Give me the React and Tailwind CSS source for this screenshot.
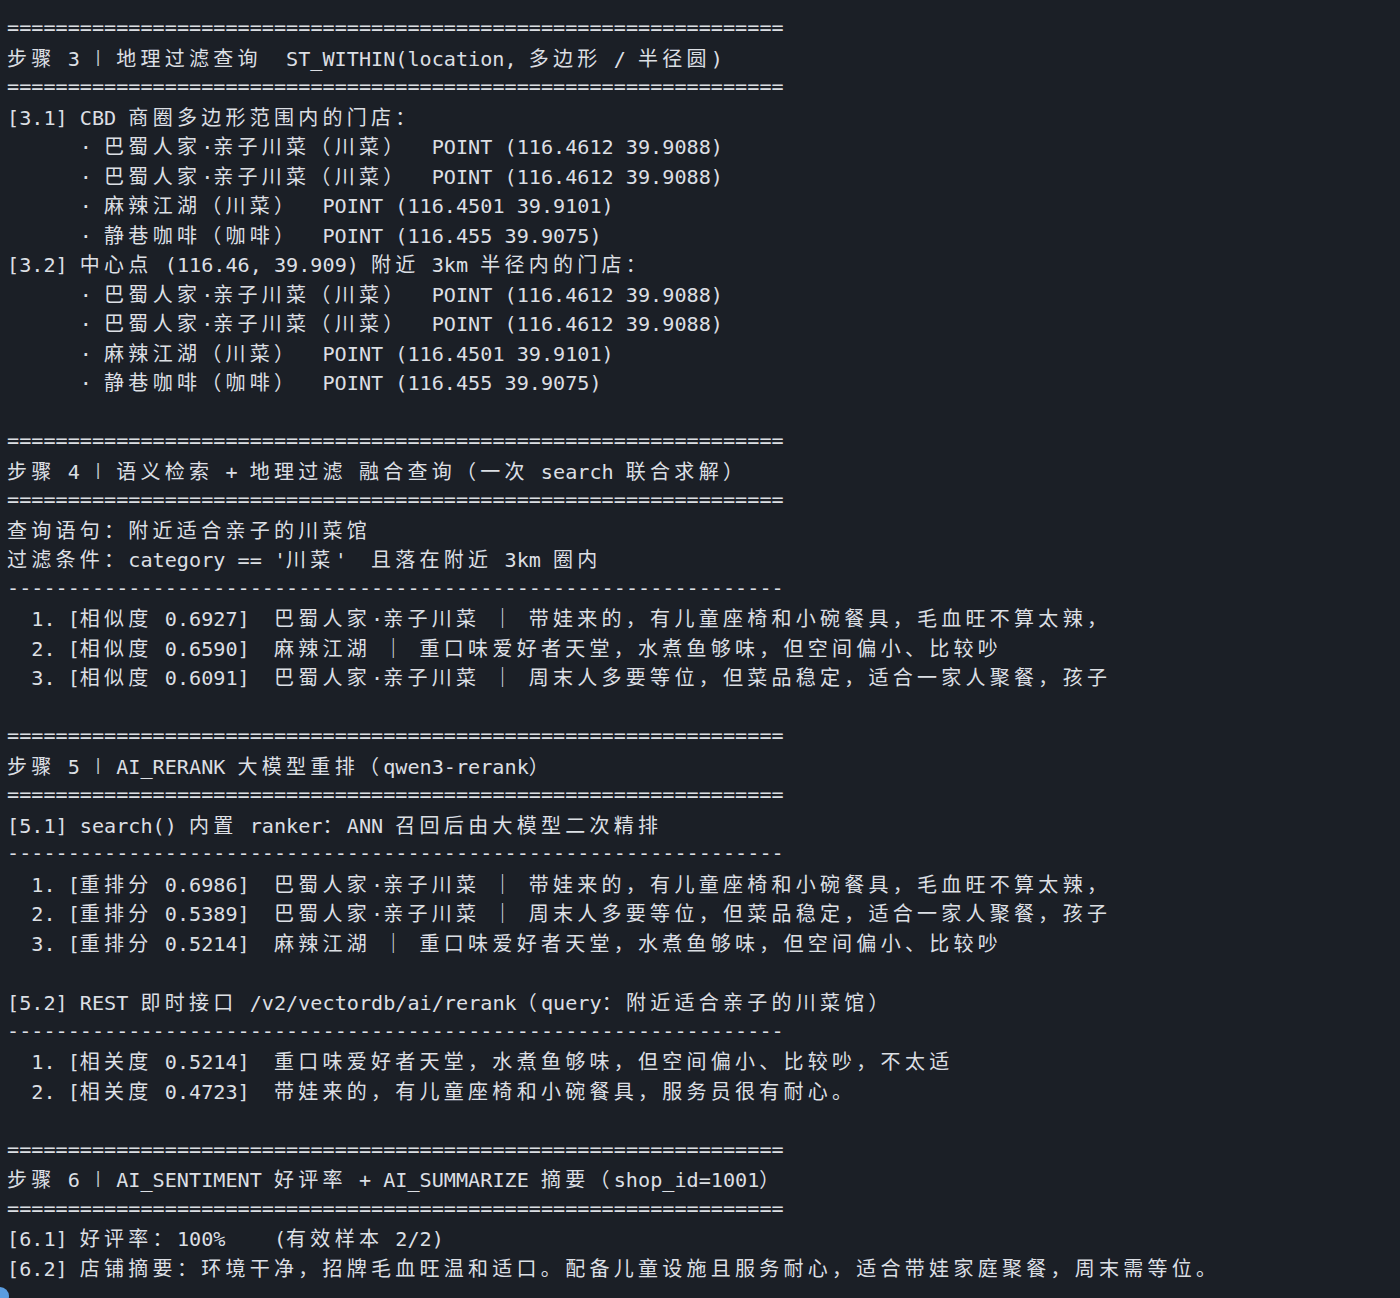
const EQ = "=".repeat(64);
const DASH = "-".repeat(64);

const LINES = [
  EQ,
  "步骤 3 | 地理过滤查询  ST_WITHIN(location, 多边形 / 半径圆)",
  EQ,
  "[3.1] CBD 商圈多边形范围内的门店：",
  "      · 巴蜀人家·亲子川菜（川菜）  POINT (116.4612 39.9088)",
  "      · 巴蜀人家·亲子川菜（川菜）  POINT (116.4612 39.9088)",
  "      · 麻辣江湖（川菜）  POINT (116.4501 39.9101)",
  "      · 静巷咖啡（咖啡）  POINT (116.455 39.9075)",
  "[3.2] 中心点 (116.46, 39.909) 附近 3km 半径内的门店：",
  "      · 巴蜀人家·亲子川菜（川菜）  POINT (116.4612 39.9088)",
  "      · 巴蜀人家·亲子川菜（川菜）  POINT (116.4612 39.9088)",
  "      · 麻辣江湖（川菜）  POINT (116.4501 39.9101)",
  "      · 静巷咖啡（咖啡）  POINT (116.455 39.9075)",
  "",
  EQ,
  "步骤 4 | 语义检索 + 地理过滤 融合查询（一次 search 联合求解）",
  EQ,
  "查询语句：附近适合亲子的川菜馆",
  "过滤条件：category == '川菜'  且落在附近 3km 圈内",
  DASH,
  "  1. [相似度 0.6927]  巴蜀人家·亲子川菜 ｜ 带娃来的，有儿童座椅和小碗餐具，毛血旺不算太辣，",
  "  2. [相似度 0.6590]  麻辣江湖 ｜ 重口味爱好者天堂，水煮鱼够味，但空间偏小、比较吵",
  "  3. [相似度 0.6091]  巴蜀人家·亲子川菜 ｜ 周末人多要等位，但菜品稳定，适合一家人聚餐，孩子",
  "",
  EQ,
  "步骤 5 | AI_RERANK 大模型重排（qwen3-rerank）",
  EQ,
  "[5.1] search() 内置 ranker：ANN 召回后由大模型二次精排",
  DASH,
  "  1. [重排分 0.6986]  巴蜀人家·亲子川菜 ｜ 带娃来的，有儿童座椅和小碗餐具，毛血旺不算太辣，",
  "  2. [重排分 0.5389]  巴蜀人家·亲子川菜 ｜ 周末人多要等位，但菜品稳定，适合一家人聚餐，孩子",
  "  3. [重排分 0.5214]  麻辣江湖 ｜ 重口味爱好者天堂，水煮鱼够味，但空间偏小、比较吵",
  "",
  "[5.2] REST 即时接口 /v2/vectordb/ai/rerank（query：附近适合亲子的川菜馆）",
  DASH,
  "  1. [相关度 0.5214]  重口味爱好者天堂，水煮鱼够味，但空间偏小、比较吵，不太适",
  "  2. [相关度 0.4723]  带娃来的，有儿童座椅和小碗餐具，服务员很有耐心。",
  "",
  EQ,
  "步骤 6 | AI_SENTIMENT 好评率 + AI_SUMMARIZE 摘要（shop_id=1001）",
  EQ,
  "[6.1] 好评率：100%    (有效样本 2/2)",
  "[6.2] 店铺摘要：环境干净，招牌毛血旺温和适口。配备儿童设施且服务耐心，适合带娃家庭聚餐，周末需等位。",
];

// terminal cells: ascii = 1 cell, cjk / fullwidth = 2 cells
const isWide = (ch) => {
  const c = ch.codePointAt(0);
  return (
    (c >= 0x2e80 && c <= 0x9fff) ||
    (c >= 0xf900 && c <= 0xfaff) ||
    (c >= 0xff00 && c <= 0xff60) ||
    (c >= 0x3000 && c <= 0x303f)
  );
};

const toRuns = (text) => {
  const runs = [];
  let buf = "";
  const flush = () => {
    if (buf) runs.push({ kind: "ascii", t: buf });
    buf = "";
  };
  for (const ch of text) {
    if (isWide(ch)) {
      flush();
      runs.push({ kind: "wide", t: ch });
    } else if (ch === "|") {
      flush();
      runs.push({ kind: "bar", t: ch });
    } else {
      buf += ch;
    }
  }
  flush();
  return runs;
};

const TermLine = ({ text }) => {
  return (
    <div className="h-[29.52px] whitespace-pre leading-[29.52px]">
      {toRuns(text).map((r, i) => {
        if (r.kind === "wide")
          return (
            <span
              key={i}
              className="inline-block w-[24.28px] font-['Noto_Sans_CJK_SC',sans-serif] text-[20px]"
            >
              {r.t}
            </span>
          );
        if (r.kind === "bar")
          return (
            <span
              key={i}
              className="inline-block w-[12.14px] text-center align-[4px] text-[16px] leading-none text-[#c9ccd1]"
            >
              {r.t}
            </span>
          );
        return <span key={i}>{r.t}</span>;
      })}
    </div>
  );
};

export default function App() {
  return (
    <div className="relative h-[1298px] w-full overflow-hidden bg-[#1b1f26] pl-[7px] pt-[13px] font-['DejaVu_Sans_Mono',monospace] text-[20.16px] text-[#dcdfe4]">
      {LINES.map((line, i) => (
        <TermLine key={i} text={line} />
      ))}
      <div className="absolute left-[-9px] top-[1287px] h-[18px] w-[18px] rounded-full bg-[#5b9de0]" />
    </div>
  );
}
